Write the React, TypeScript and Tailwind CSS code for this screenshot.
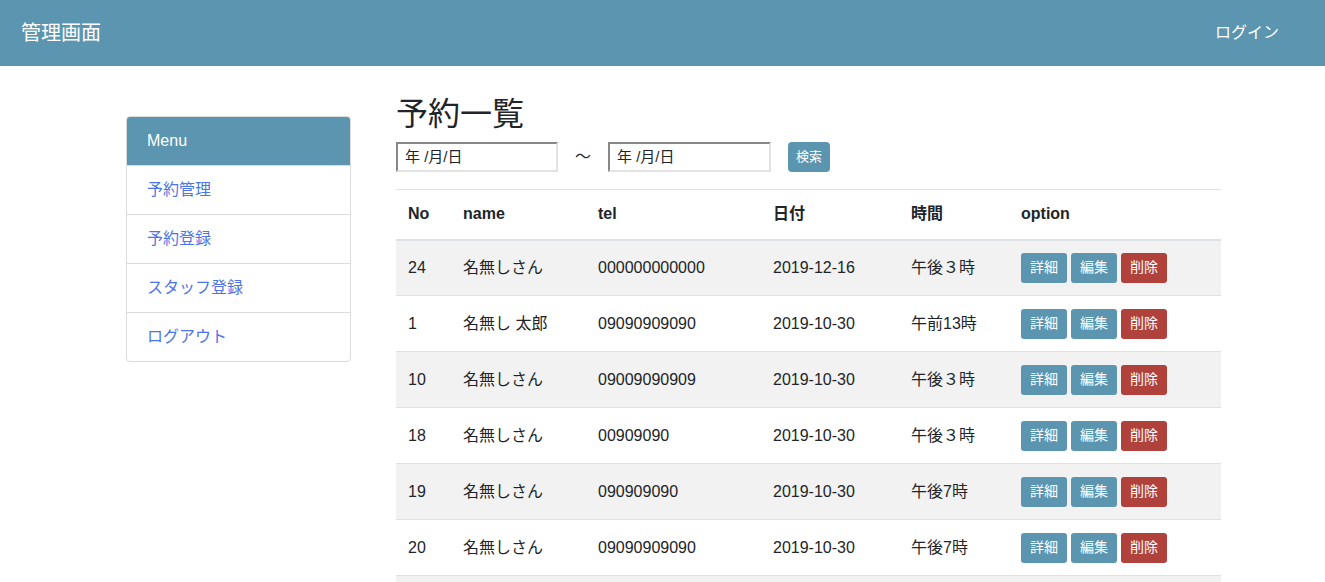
import { useState } from "react";

type Reservation = {
    id: number
    name: string
    tel: string
    date: string
    time: string
}

const rows: Reservation[] = [
    { id: 24, name: "名無しさん", tel: "000000000000", date: "2019-12-16", time: "午後３時" },
    { id: 1, name: "名無し 太郎", tel: "09090909090", date: "2019-10-30", time: "午前13時" },
    { id: 10, name: "名無しさん", tel: "09009090909", date: "2019-10-30", time: "午後３時" },
    { id: 18, name: "名無しさん", tel: "00909090", date: "2019-10-30", time: "午後３時" },
    { id: 19, name: "名無しさん", tel: "090909090", date: "2019-10-30", time: "午後7時" },
    { id: 20, name: "名無しさん", tel: "09090909090", date: "2019-10-30", time: "午後7時" },
    { id: 21, name: "名無しさん", tel: "09090909090", date: "2019-10-30", time: "午後7時" },
]

const menu = ["予約管理", "予約登録", "スタッフ登録", "ログアウト"]

const App = () => {
    const [from, setFrom] = useState<string>("")
    const [to, setTo] = useState<string>("")

    return (
        <div className="min-h-screen bg-white text-[#212529] font-['Liberation_Sans','Noto_Sans_CJK_JP',sans-serif]">
            <header className="flex justify-between items-center h-[66px] bg-[#5b95b0] pl-[21px] pr-[46px]">
                <span className="text-[20px] text-white">管理画面</span>
                <a className="text-[16px] text-white">ログイン</a>
            </header>

            <div className="flex pt-[50px] pl-[126px]">
                <aside className="w-[225px] shrink-0">
                    <div className="border border-[#dcdcdc] rounded overflow-hidden">
                        <div className="h-[48px] flex items-center px-5 bg-[#5b95b0] text-white text-[16px]">Menu</div>
                        {menu.map((item) => (
                            <div key={item}
                                 className="h-[49px] flex items-center px-5 border-t border-[#dcdcdc] text-[16px] text-[#4d74e6]">
                                {item}
                            </div>
                        ))}
                    </div>
                </aside>

                <main className="ml-[45px] w-[825px] -mt-[22px]">
                    <h1 className="text-[32px] leading-[40px] font-normal">予約一覧</h1>

                    <div className="flex items-center mt-[8px]">
                        <input type="date" value={from} onChange={(e) => setFrom(e.target.value)}
                               className="hidden" />
                        <div className="w-[162px] h-[30px] flex items-center px-[7px] border-2 border-t-[#888] border-l-[#888] border-r-[#e2e2e2] border-b-[#e2e2e2] text-[15px]">
                            年 /月/日
                        </div>
                        <span className="mx-[17px] text-[16px]">〜</span>
                        <input type="date" value={to} onChange={(e) => setTo(e.target.value)}
                               className="hidden" />
                        <div className="w-[163px] h-[30px] flex items-center px-[7px] border-2 border-t-[#888] border-l-[#888] border-r-[#e2e2e2] border-b-[#e2e2e2] text-[15px]">
                            年 /月/日
                        </div>
                        <button className="ml-[17px] h-[30px] px-[8px] rounded bg-[#5b95b0] text-white text-[13px]">検索</button>
                    </div>

                    <table className="mt-[17px] w-full border-collapse text-[16px]">
                        <thead>
                            <tr className="border-t border-[#dee2e6] border-b-2 border-b-[#dee2e6]">
                                <th className="w-[55px] h-[50px] px-3 text-left font-bold">No</th>
                                <th className="w-[135px] px-3 text-left font-bold">name</th>
                                <th className="w-[175px] px-3 text-left font-bold">tel</th>
                                <th className="w-[138px] px-3 text-left font-bold">日付</th>
                                <th className="w-[110px] px-3 text-left font-bold">時間</th>
                                <th className="px-3 text-left font-bold">option</th>
                            </tr>
                        </thead>
                        <tbody>
                            {rows.map((r, i) => (
                                <tr key={r.id} className={`border-t border-[#dee2e6] ${i % 2 === 0 ? "bg-[#f2f2f2]" : "bg-white"}`}>
                                    <td className="h-[56px] px-3">{r.id}</td>
                                    <td className="px-3">{r.name}</td>
                                    <td className="px-3">{r.tel}</td>
                                    <td className="px-3">{r.date}</td>
                                    <td className="px-3">{r.time}</td>
                                    <td className="px-3">
                                        <div className="flex gap-[4px]">
                                            <button className="h-[30px] w-[46px] rounded-[3px] bg-[#5b95b0] text-white text-[14px]">詳細</button>
                                            <button className="h-[30px] w-[46px] rounded-[3px] bg-[#5b95b0] text-white text-[14px]">編集</button>
                                            <button className="h-[30px] w-[46px] rounded-[3px] bg-[#b0423b] text-white text-[14px]">削除</button>
                                        </div>
                                    </td>
                                </tr>
                            ))}
                        </tbody>
                    </table>
                </main>
            </div>
        </div>
    )
}

export default App
